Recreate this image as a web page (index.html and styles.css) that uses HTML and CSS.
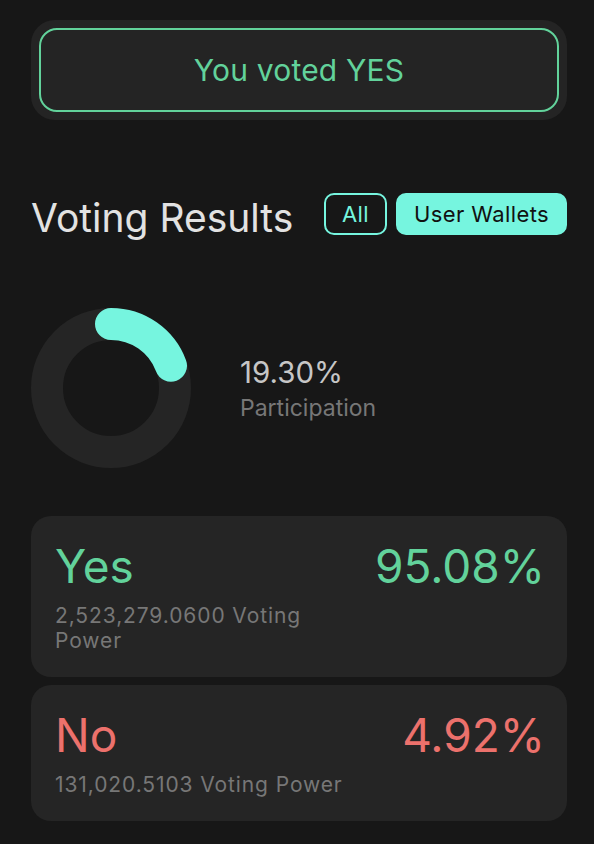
FILE: index.html
```html
<!DOCTYPE html>
<html lang="en">
<head>
<meta charset="utf-8">
<title>Voting Results</title>
<link rel="stylesheet" href="styles.css">
</head>
<body>
<main class="page">
  <section class="vote-status">
    <div class="vote-status__inner">You voted YES</div>
  </section>

  <header class="results-header">
    <h2 class="results-header__title">Voting Results</h2>
    <div class="filter">
      <button class="filter__btn">All</button>
      <button class="filter__btn filter__btn--active">User Wallets</button>
    </div>
  </header>

  <section class="participation">
    <svg class="donut" width="160" height="160" viewBox="0 0 160 160">
      <circle cx="80" cy="80" r="64" fill="none" stroke="#252525" stroke-width="32"/>
      <circle cx="80" cy="80" r="64" fill="none" stroke="#76f5df" stroke-width="32"
        stroke-linecap="round" stroke-dasharray="77.6 402.1" transform="rotate(-90 80 80)"/>
    </svg>
    <div class="participation__text">
      <div class="participation__value">19.30%</div>
      <div class="participation__label">Participation</div>
    </div>
  </section>

  <section class="result-list">
    <div class="result result--yes">
      <div class="result__main">
        <div class="result__name">Yes</div>
        <div class="result__power">2,523,279.0600 Voting Power</div>
      </div>
      <div class="result__pct">95.08%</div>
    </div>
    <div class="result result--no">
      <div class="result__main">
        <div class="result__name">No</div>
        <div class="result__power">131,020.5103 Voting Power</div>
      </div>
      <div class="result__pct">4.92%</div>
    </div>
  </section>
</main>
</body>
</html>
```

FILE: styles.css
```css
* { box-sizing: border-box; }

html, body {
  margin: 0;
  background: #171717;
  font-family: Inter, "Noto Sans", sans-serif;
}

.page {
  padding: 20px 27px 0 31px;
}

.vote-status {
  background: #242424;
  border-radius: 24px;
  padding: 8px;
}

.vote-status__inner {
  height: 84px;
  border: 2px solid #62d29b;
  border-radius: 18px;
  display: flex;
  align-items: center;
  justify-content: center;
  color: #62d29b;
  font-size: 30px;
  letter-spacing: 0.2px;
}

.results-header {
  display: flex;
  align-items: flex-start;
  justify-content: space-between;
  margin-top: 73px;
}

.results-header__title {
  margin: 0;
  font-weight: 400;
  font-size: 39px;
  color: #e2e2e2;
  line-height: 42px;
  padding-top: 4px;
}

.filter {
  display: flex;
  gap: 9px;
}

.filter__btn {
  font-family: inherit;
  font-size: 22px;
  letter-spacing: 0.4px;
  white-space: nowrap;
  height: 42px;
  padding: 0 16px;
  border-radius: 10px;
  border: 2px solid #76f5df;
  background: transparent;
  color: #76f5df;
  cursor: pointer;
}

.filter__btn--active {
  background: #76f5df;
  color: #111;
  width: 171px;
  padding: 0;
}

.participation {
  display: flex;
  align-items: center;
  gap: 49px;
  margin-top: 69px;
}

.donut { display: block; }

.participation__text {
  display: flex;
  flex-direction: column;
  gap: 4px;
}

.participation__value {
  font-size: 29.5px;
  color: #c6c6c6;
  line-height: 36px;
}

.participation__label {
  font-size: 23px;
  color: #777;
  line-height: 28px;
}

.result-list {
  display: flex;
  flex-direction: column;
  gap: 8px;
  margin-top: 48px;
}

.result {
  background: #252525;
  border-radius: 20px;
  padding: 24px 22px 24px 24px;
  display: flex;
  justify-content: space-between;
  align-items: flex-start;
}

.result__main {
  max-width: 300px;
}

.result__name,
.result__pct {
  font-size: 46px;
  line-height: 52px;
}

.result__power {
  margin-top: 11px;
  font-size: 21px;
  letter-spacing: 0.9px;
  line-height: 25px;
  color: #777;
}

.result--yes .result__name,
.result--yes .result__pct { color: #62d29b; }

.result--no .result__name,
.result--no .result__pct { color: #ec716c; }
```
